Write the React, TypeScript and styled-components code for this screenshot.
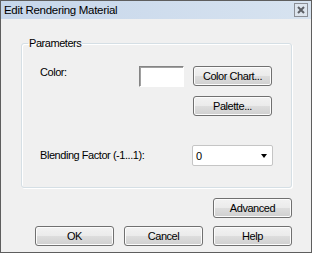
import React from 'react';
import styled, { createGlobalStyle } from 'styled-components';

const Global = createGlobalStyle`
  html, body {
    margin: 0;
    padding: 0;
    background: #f0f0f0;
  }
  * {
    box-sizing: border-box;
  }
`;

const Window = styled.div`
  width: 312px;
  height: 253px;
  display: flex;
  flex-direction: column;
  background: #f0f0f0;
  border: 1px solid #5e5e5e;
  font-family: 'Liberation Sans', Arial, sans-serif;
  font-size: 11px;
  letter-spacing: -0.45px;
  color: #000;
`;

const TitleBar = styled.div`
  height: 18px;
  display: flex;
  align-items: center;
  justify-content: space-between;
  padding: 0 3px 0 3px;
  background: linear-gradient(to right, #c6d6ea, #d7e3f0);
`;

const Title = styled.span`
  font-size: 11.5px;
  letter-spacing: -0.3px;
  color: #000;
`;

const CloseBox = styled.button`
  width: 14px;
  height: 14px;
  padding: 0;
  display: flex;
  align-items: center;
  justify-content: center;
  border: 1px solid #8b8f96;
  background: #dde5ee;
  color: #5d6066;
  cursor: pointer;
`;

const Body = styled.div`
  flex: 1;
  display: flex;
  flex-direction: column;
  padding: 18px 19px 0 20px;
`;

const Group = styled.fieldset`
  margin: 0;
  height: 151px;
  padding: 16px 18px 0 18px;
  border: 1px solid #d5dfe5;
  border-radius: 3px;
  box-shadow: inset 1px 1px 0 #fff, 1px 1px 0 #fff;
`;

const Legend = styled.legend`
  padding: 0 1px;
  margin-left: -12px;
  line-height: 13px;
`;

const Row = styled.div`
  display: flex;
  align-items: flex-start;
`;

const Label = styled.span<{ $width?: number }>`
  width: ${(p) => (p.$width ? `${p.$width}px` : 'auto')};
  flex: ${(p) => (p.$width ? 'none' : 1)};
  line-height: 13px;
  padding-top: ${(p) => (p.$width ? 0 : 4)}px;
`;

const Swatch = styled.div`
  width: 45px;
  height: 21px;
  background: #fff;
  border: 1px solid;
  border-color: #848484 #fff #fff #848484;
  box-shadow: inset 1px 1px 0 #a0a0a0;
`;

const ButtonColumn = styled.div`
  display: flex;
  flex-direction: column;
  gap: 10px;
  margin-left: 9px;
`;

const Button = styled.button`
  width: 79px;
  height: 20px;
  padding: 0;
  font-family: inherit;
  font-size: 11px;
  letter-spacing: inherit;
  color: #000;
  border: 1px solid #707070;
  border-radius: 3px;
  background: linear-gradient(#f2f2f2 0%, #ebebeb 48%, #dddddd 52%, #cfcfcf 100%);
  box-shadow: inset 0 0 0 1px #fcfcfc;
  cursor: pointer;
`;

const BlendRow = styled(Row)`
  margin-top: 29px;
`;

const Combo = styled.div`
  width: 81px;
  height: 21px;
  display: flex;
  align-items: center;
  justify-content: space-between;
  padding: 0 5px 0 3px;
  background: #fff;
  border: 1px solid #c5c5c5;
  border-radius: 2px;
`;

const Arrow = styled.span`
  width: 0;
  height: 0;
  border-left: 3.5px solid transparent;
  border-right: 3.5px solid transparent;
  border-top: 4px solid #000;
`;

const Actions = styled.div`
  display: flex;
  justify-content: flex-end;
  gap: 10px;
  margin-top: 10px;
`;

const Footer = styled(Actions)`
  margin-top: 8px;
`;

export default function App() {
  return (
    <>
      <Global />
      <Window>
        <TitleBar>
          <Title>Edit Rendering Material</Title>
          <CloseBox aria-label="Close">
            <svg width="8" height="8" viewBox="0 0 8 8">
              <path d="M1 1 L7 7 M7 1 L1 7" stroke="currentColor" strokeWidth="2" />
            </svg>
          </CloseBox>
        </TitleBar>
        <Body>
          <Group>
            <Legend>Parameters</Legend>
            <Row>
              <Label $width={99}>Color:</Label>
              <Swatch />
              <ButtonColumn>
                <Button>Color Chart...</Button>
                <Button>Palette...</Button>
              </ButtonColumn>
            </Row>
            <BlendRow>
              <Label>Blending Factor (-1...1):</Label>
              <Combo>
                <span>0</span>
                <Arrow />
              </Combo>
            </BlendRow>
          </Group>
          <Actions>
            <Button>Advanced</Button>
          </Actions>
          <Footer>
            <Button>OK</Button>
            <Button>Cancel</Button>
            <Button>Help</Button>
          </Footer>
        </Body>
      </Window>
    </>
  );
}
